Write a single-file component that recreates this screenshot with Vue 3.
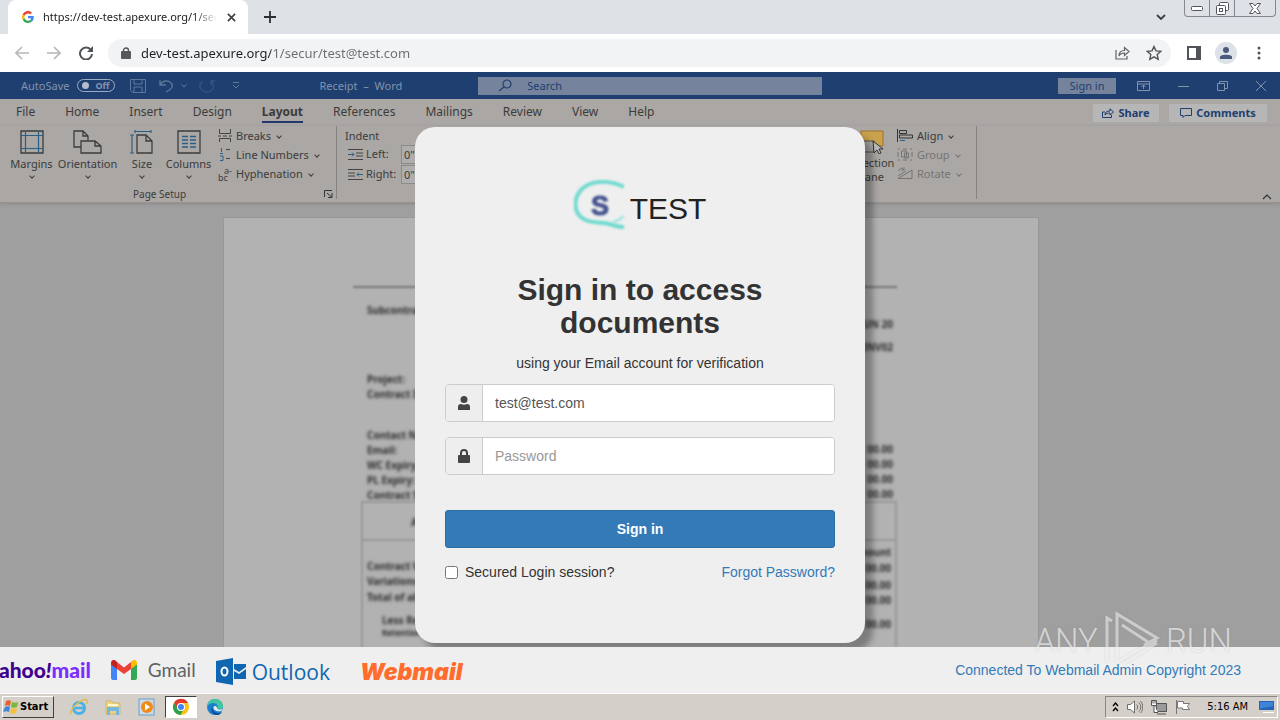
<template>
    <div class="screen">
        <!-- browser tabs -->
        <header class="tab_strip">
            <div class="tab">
                <svg class="g_logo" viewBox="0 0 48 48" width="12" height="12">
                    <path fill="#ea4335" d="M24 9.5c3.5 0 6.700 1.200 9.200 3.600l6.900-6.900C35.900 2.400 30.500 0 24 0 14.600 0 6.500 5.400 2.600 13.200l8 6.200C12.400 13.700 17.700 9.500 24 9.500z" />
                    <path fill="#4285f4" d="M47 24.500c0-1.600-.2-3.100-.4-4.500H24v9h12.900c-.6 3-2.300 5.500-4.800 7.200l7.700 6C44.400 38 47 31.800 47 24.500z" />
                    <path fill="#fbbc05" d="M10.500 28.600a14.500 14.500 0 0 1 0-9.200l-8-6.200a24 24 0 0 0 0 21.600l8-6.200z" />
                    <path fill="#34a853" d="M24 48c6.500 0 11.900-2.100 15.900-5.800l-7.700-6c-2.200 1.500-5 2.300-8.200 2.300-6.300 0-11.600-4.200-13.500-9.900l-8 6.200C6.500 42.600 14.600 48 24 48z" />
                </svg>
                <span class="tab_title">https://dev-test.apexure.org/1/secur</span>
                <button class="plain" aria-label="Close tab">
                    <svg viewBox="0 0 10 10" width="9" height="9"><path d="M1 1l8 8M9 1l-8 8" stroke="#3c4043" stroke-width="1.800" /></svg>
                </button>
            </div>
            <button class="plain new_tab" aria-label="New tab">
                <svg viewBox="0 0 12 12" width="12" height="12"><path d="M6 0v12M0 6h12" stroke="#2b2e33" stroke-width="1.800" /></svg>
            </button>
            <button class="plain tab_search" aria-label="Search tabs">
                <svg viewBox="0 0 10 6" width="10" height="6"><path d="M1 1l4 4 4-4" fill="none" stroke="#3c4043" stroke-width="1.800" /></svg>
            </button>
            <div class="window_buttons">
                <button aria-label="Minimize">
                    <svg viewBox="0 0 12 5" width="12" height="5"><rect x=".5" y=".5" width="11" height="4" rx="1" fill="#fff" stroke="#50545c" /></svg>
                </button>
                <button aria-label="Restore">
                    <svg viewBox="0 0 13 13" width="13" height="13" fill="#fff" stroke="#50545c"><rect x="3.500" y=".5" width="9" height="8" rx="1" /><rect x=".5" y="3.500" width="9" height="9" rx="1" /><rect x="3.500" y="6.500" width="3" height="3" /></svg>
                </button>
                <button class="wide" aria-label="Close">
                    <svg viewBox="0 0 12 11" width="12" height="11"><path d="M.5.5h3.500l2 2.500 2-2.500h3.500l-3.500 5 3.500 5H8L6 8l-2 2.500H.5l3.500-5z" fill="#fff" stroke="#50545c" /></svg>
                </button>
            </div>
        </header>

        <!-- address bar -->
        <nav class="toolbar">
            <button class="plain" aria-label="Back">
                <svg viewBox="0 0 14 14" width="14" height="14" fill="none" stroke="#b4b6b9" stroke-width="1.600"><path d="M14 7H1M7 1L1 7l6 6" /></svg>
            </button>
            <button class="plain" aria-label="Forward">
                <svg viewBox="0 0 14 14" width="14" height="14" fill="none" stroke="#b4b6b9" stroke-width="1.600"><path d="M0 7h13M7 1l6 6-6 6" /></svg>
            </button>
            <button class="plain" aria-label="Reload">
                <svg viewBox="0 0 14 14" width="14" height="14"><path d="M12 4.200A6 6 0 1 0 13 8" fill="none" stroke="#505357" stroke-width="2" /><path d="M14 0v6H8z" fill="#505357" /></svg>
            </button>
            <div class="address">
                <svg viewBox="0 0 10 12" width="10" height="12"><rect y="4" width="10" height="8" rx="1" fill="#55585c" /><path d="M2.500 5V3.500a2.500 2.500 0 0 1 5 0V5" fill="none" stroke="#55585c" stroke-width="1.400" /></svg>
                <input v-model="url" type="text" aria-label="Address" spellcheck="false">
                <button class="plain" aria-label="Share page">
                    <svg viewBox="0 0 15 14" width="15" height="14" fill="none" stroke="#5f6368" stroke-width="1.200"><path d="M1 4v9h11V10M4 10c0-4 2-5.500 5.500-5.500V1.500l4.500 4-4.500 4V7C7 7 5 8 4 10z" /></svg>
                </button>
                <button class="plain" aria-label="Bookmark">
                    <svg viewBox="0 0 16 16" width="16" height="16"><path d="M8 1.500l2 4.400 4.700.5-3.500 3.200 1 4.700L8 11.900l-4.200 2.400 1-4.700L1.300 6.400 6 5.900z" fill="none" stroke="#505357" stroke-width="1.400" /></svg>
                </button>
            </div>
            <button class="plain panel" aria-label="Side panel">
                <svg viewBox="0 0 14 14" width="14" height="14"><path d="M1 1h12v12H1z" fill="none" stroke="#505357" stroke-width="2" /><path d="M9 1h4v12H9z" fill="#505357" /></svg>
            </button>
            <button class="plain profile" aria-label="Profile">
                <svg viewBox="0 0 22 22" width="22" height="22"><circle cx="11" cy="11" r="11" fill="#dde1e8" /><circle cx="11" cy="8" r="3" fill="#4a5a7c" /><path d="M5 17v-2c0-3 12-3 12 0v2z" fill="#4a5a7c" /></svg>
            </button>
            <button class="plain dots" aria-label="Menu">
                <svg viewBox="0 0 4 14" width="4" height="14" fill="#505357"><circle cx="2" cy="2" r="1.500" /><circle cx="2" cy="7" r="1.500" /><circle cx="2" cy="12" r="1.500" /></svg>
            </button>
        </nav>

        <main class="stage">
            <!-- word window behind the dialog -->
            <div class="word">
                <div class="word_title">
                    <span>AutoSave</span>
                    <button class="toggle"><i></i>Off</button>
                    <svg class="save" viewBox="0 0 16 14" width="16" height="14" fill="none" stroke="#5f779b"><path d="M.5.5h15v13H3L.5 11.500zM4 .5V5h8V.5M4 13V8h8v5" /></svg>
                    <svg viewBox="0 0 16 14" width="16" height="14" fill="none" stroke="#5f779b" stroke-width="1.300"><path d="M1 1v5h6M1 6c3-5 8-5 11-2s1 6-5 9" /></svg>
                    <svg class="tiny" viewBox="0 0 6 4" width="6" height="4" fill="none" stroke="#5f779b"><path d="M.5.5L3 3 5.500.5" /></svg>
                    <svg viewBox="0 0 16 14" width="16" height="14" fill="none" stroke="#365682" stroke-width="1.300"><path d="M3 2.500C-3 9 5 13 8 13c6 0 9-6 4-11V6M12 2h4" /></svg>
                    <svg class="more" viewBox="0 0 8 7" width="8" height="7" fill="none" stroke="#5f779b"><path d="M1 .5h6M1 3l3 3 3-3" /></svg>
                    <span class="doc_name">Receipt &nbsp;–&nbsp; Word</span>
                    <label class="search">
                        <svg viewBox="0 0 14 13" width="14" height="13" fill="none" stroke="#1e3f70" stroke-width="1.200"><circle cx="9" cy="5" r="4" /><path d="M6 8l-5 4" /></svg>
                        <input type="text" placeholder="Search" aria-label="Search document">
                    </label>
                    <button class="word_sign">Sign in</button>
                    <div class="word_controls">
                        <svg viewBox="0 0 13 10" width="13" height="10" fill="none" stroke="#8293ad"><path d="M.5.5h12v9H.5zM.5 3h12M6.500 8V4M4.500 6l2-2 2 2" /></svg>
                        <svg viewBox="0 0 11 10" width="11" height="10" stroke="#8293ad"><path d="M0 5.500h11" /></svg>
                        <svg viewBox="0 0 11 10" width="11" height="10" fill="none" stroke="#8293ad"><path d="M.5 2.500h7v7h-7zM2.500 2.500v-2h8v7h-3" /></svg>
                        <svg viewBox="0 0 10 10" width="10" height="10" stroke="#8293ad"><path d="M0 0l10 10M10 0L0 10" /></svg>
                    </div>
                </div>

                <div class="menu">
                    <button v-for="name in menus" :key="name" :class="{ active: name === 'Layout' }">{{ name }}</button>
                    <button class="chip first">
                        <svg viewBox="0 0 12 10" width="12" height="10" fill="none" stroke="#1e3f70"><path d="M3 4H.5v5.500h9V7M3 7c0-3 2-4 5-4V.8L11.500 4 8 7V5C6 5 4 5.500 3 7z" /></svg>
                        Share
                    </button>
                    <button class="chip">
                        <svg viewBox="0 0 12 10" width="12" height="10" fill="none" stroke="#1e3f70"><path d="M.5.5h11v7H5l-2 2v-2H.5z" /></svg>
                        Comments
                    </button>
                </div>

                <div class="ribbon">
                    <section class="group page_setup">
                        <div class="tools">
                            <button class="big">
                                <svg viewBox="0 0 24 24" width="24" height="24" fill="none"><path d="M1 1h22v22H1z" stroke="#3c3c3c" stroke-width="1.300" /><path d="M5.500 1v22M18.500 1v22M1 5.500h22M1 18.500h22" stroke="#2c5f85" stroke-width="1.200" /></svg>
                                Margins<em></em>
                            </button>
                            <button class="big">
                                <svg viewBox="0 0 30 24" width="30" height="24" fill="none" stroke="#3c3c3c" stroke-width="1.300"><path d="M8 17H1V1h9l5 5v4M10 1v5h5" /><path d="M8 11h14l6 5v7H8zM22 11v5h6" /></svg>
                                Orientation<em></em>
                            </button>
                            <button class="big">
                                <svg viewBox="0 0 24 24" width="24" height="24" fill="none"><path d="M7 5h9l6 6v12H7zM16 5v6h6" stroke="#3c3c3c" stroke-width="1.300" /><path d="M5 1.500h16M2 5v18M5 0v3M21 0v3M0 5h4M0 23h4" stroke="#2c5f85" stroke-width="1.200" /></svg>
                                Size<em></em>
                            </button>
                            <button class="big">
                                <svg viewBox="0 0 24 24" width="24" height="24" fill="none"><path d="M1 1h22v22H1z" stroke="#3c3c3c" stroke-width="1.300" /><path d="M5 6.500h6M5 10h6M5 13.500h6M5 17h6M13 6.500h6M13 10h6M13 13.500h6M13 17h6" stroke="#2c5f85" stroke-width="1.400" /></svg>
                                Columns<em></em>
                            </button>
                            <div class="list">
                                <button>
                                    <svg viewBox="0 0 14 13" width="14" height="13" fill="none" stroke="#444"><path d="M1.500 0v4.500h11V0M1.500 13V9.500h11V13M0 7h3M5 7h4M11 7h3" /></svg>
                                    Breaks<em></em>
                                </button>
                                <button>
                                    <svg viewBox="0 0 14 13" width="14" height="13" fill="none"><path d="M3.500 0v4M2 5.500h3M2 8h3v4.500H2" stroke="#2c5f85" /><path d="M8 1.500h4M8 10.500h4" stroke="#444" /></svg>
                                    Line Numbers<em></em>
                                </button>
                                <button>
                                    <span class="hyphen"><span>a-</span><span>bc</span></span>
                                    Hyphenation<em></em>
                                </button>
                            </div>
                        </div>
                        <div class="caption">
                            <span>Page Setup</span>
                            <svg viewBox="0 0 9 8" width="9" height="8" fill="none" stroke="#333"><path d="M.5 7V.5H8M3 3l5 4.500M8 3v4.500H4" /></svg>
                        </div>
                    </section>
                    <section class="group indent">
                        <div>Indent</div>
                        <label>
                            <svg viewBox="0 0 15 11" width="15" height="11" fill="none"><path d="M0 .5h15M8 4h7M8 7h7M0 10.500h15" stroke="#444" /><path d="M0 5.500h6M4 3.500l2 2-2 2" stroke="#2c5f85" /></svg>
                            <span>Left:</span>
                            <input type="text" value='0"'>
                        </label>
                        <label>
                            <svg viewBox="0 0 15 11" width="15" height="11" fill="none"><path d="M0 .5h15M0 4h7M0 7h7M0 10.500h15" stroke="#444" /><path d="M9 5.500h6M11 3.500l-2 2 2 2" stroke="#2c5f85" /></svg>
                            <span>Right:</span>
                            <input type="text" value='0"'>
                        </label>
                    </section>
                    <section class="group arrange">
                        <button class="big">
                            <svg viewBox="0 0 28 24" width="28" height="24"><path d="M4 1h22v15H4z" fill="#c9a24e" stroke="#a5702a" /><path d="M1 11h16v11H1z" fill="#aaa7a5" stroke="#555" /><path d="M16 11l1 12 3-3 2 4 2-1-2-4h4z" fill="#bbb" stroke="#333" /></svg>
                            Selection<br>Pane
                        </button>
                        <div class="list">
                            <button>
                                <svg viewBox="0 0 16 13" width="16" height="13" fill="none" stroke="#333"><path d="M.5 0v13M2.500 1.500h7v3h-7zM2.500 6h13v3h-13z" /><path d="M8 11.500H3" stroke="#2c5f85" /></svg>
                                Align<em></em>
                            </button>
                            <button class="dim">
                                <svg viewBox="0 0 16 13" width="16" height="13" fill="none" stroke="#767472"><path d="M1 1h2M6 1h4M13 1h2M1 12h2M6 12h4M13 12h2M1 4v5M15 4v5M4.500 3v6h5V3zM7.500 5v5h4V5z" /></svg>
                                Group<em></em>
                            </button>
                            <button class="dim">
                                <svg viewBox="0 0 16 13" width="16" height="13" fill="none" stroke="#767472"><path d="M1 11.500h14V3zM1 9l8-5M2 4c0-4 5-3 5-1M7 0v3H4" /></svg>
                                Rotate<em></em>
                            </button>
                        </div>
                    </section>
                    <svg class="collapse" viewBox="0 0 10 6" width="10" height="6"><path d="M1 5l4-4 4 4" fill="none" stroke="#333" stroke-width="1.200" /></svg>
                </div>

                <div class="sheet">
                    <div class="paper">
                        <div class="part details">
                            <div v-for="(col, i) in details" :key="i" class="col">
                                <p v-for="(line, n) in col" :key="n" :style="{ marginTop: line[1] + 'px' }">{{ line[0] }}</p>
                            </div>
                        </div>
                        <div class="part amounts">
                            <div v-for="(col, i) in amounts" :key="i" class="col">
                                <p v-for="(line, n) in col" :key="n" :class="line[2]" :style="{ marginTop: line[1] + 'px' }">{{ line[0] }}</p>
                            </div>
                        </div>
                    </div>
                </div>
            </div>

            <form class="dialog" @submit.prevent>
                <div class="brand">
                    <svg viewBox="0 0 50 50" width="50" height="50">
                        <path d="M50 7C36 0 19 0 9 8-1 17-1 31 8 38c8 6 20 4 27 6 6 2 10 3 15 3" fill="none" stroke="#6fdad0" stroke-width="4" />
                        <path d="M50 36c-3 3-6 5-11 6" fill="none" stroke="#a5e4df" stroke-width="3" />
                        <text x="26" y="35" text-anchor="middle">S</text>
                    </svg>
                    <span>TEST</span>
                </div>
                <h1>Sign in to access documents</h1>
                <p class="hint">using your Email account for verification</p>
                <div class="field">
                    <label for="email">
                        <svg viewBox="0 0 12 14" width="12" height="14" fill="#444"><circle cx="6" cy="3.500" r="3.500" /><path d="M0 14v-3c0-2 1-3 3-3 2 1 4 1 6 0 2 0 3 1 3 3v3z" /></svg>
                    </label>
                    <input id="email" v-model="email" type="text" aria-label="Email">
                </div>
                <div class="field">
                    <label for="password">
                        <svg viewBox="0 0 12 14" width="12" height="14"><rect y="6" width="12" height="8" rx="1" fill="#444" /><path d="M3 7V4a3 3 0 0 1 6 0v3" fill="none" stroke="#444" stroke-width="2" /></svg>
                    </label>
                    <input id="password" v-model="password" type="password" placeholder="Password" aria-label="Password">
                </div>
                <button class="submit" type="submit">Sign in</button>
                <div class="options">
                    <label><input v-model="secured" type="checkbox">Secured Login session?</label>
                    <a href="#">Forgot Password?</a>
                </div>
            </form>
        </main>

        <footer class="mail_bar">
            <div class="yahoo">yahoo<i>!</i><b>mail</b></div>
            <div class="gmail">
                <svg viewBox="0 0 26 20" width="26" height="20">
                    <path d="M0 3v15c0 1 1 2 2 2h4V8z" fill="#4285f4" />
                    <path d="M26 3v15c0 1-1 2-2 2h-4V8z" fill="#34a853" />
                    <path d="M20 2v7l6-4.500V3c0-3-3-4-5-2z" fill="#fbbc04" />
                    <path d="M6 9V2l7 5.500L20 2v7l-7 5z" fill="#ea4335" />
                    <path d="M0 3v1.500L6 9V2L5 1C3-1 0 0 0 3z" fill="#c5221f" />
                </svg>
                Gmail
            </div>
            <div class="outlook">
                <svg viewBox="0 0 31 27" width="31" height="27">
                    <path d="M0 3l17-3v27L0 24z" fill="#1066b0" />
                    <path d="M18 6h12v3l-7 5-5-3zM18 13l5 3 7-5v10H18z" fill="#1066b0" />
                    <ellipse cx="8.500" cy="13.500" rx="3" ry="4" fill="none" stroke="#fff" stroke-width="2" />
                </svg>
                Outlook
            </div>
            <div class="webmail">Webmail</div>
            <a class="copyright" href="#">Connected To Webmail Admin Copyright 2023</a>
        </footer>

        <div class="taskbar">
            <button class="start">
                <svg viewBox="0 0 16 15" width="16" height="15">
                    <path d="M3 1c2-1 4-1 5 0L7 6C5 5 4 5 2 6z" fill="#e8622a" />
                    <path d="M9 2c2 1 4 1 6 0l-1 5c-2 1-4 1-6 0z" fill="#7ab83c" />
                    <path d="M2 7c2-1 4-1 5 0l-1 5c-2-1-4-1-6 0z" fill="#3f86d8" />
                    <path d="M8 8c2 1 4 1 6 0l-1 5c-2 1-4 1-6 0z" fill="#f5c13a" />
                </svg>
                Start
            </button>
            <button class="task" aria-label="Internet Explorer">
                <svg viewBox="0 0 18 18" width="18" height="18" fill="none"><circle cx="9" cy="10" r="5.500" stroke="#4bb0e6" stroke-width="3" /><path d="M5 10h9" stroke="#4bb0e6" stroke-width="2.500" /><path d="M1 16C-1 11 13-1 17 2c1 1 0 3-1 4" stroke="#e3bd45" stroke-width="1.500" /></svg>
            </button>
            <button class="task" aria-label="Explorer">
                <svg viewBox="0 0 18 18" width="18" height="18"><path d="M2 3h6l1 2h7v11H2z" fill="#edd382" stroke="#c8a850" stroke-width=".6" /><path d="M3 9h12v8h-3v-4H6v4H3z" fill="#75b8dd" /><path d="M4 6h10v2H4z" fill="#fff6cf" /></svg>
            </button>
            <button class="task" aria-label="Media Player">
                <svg viewBox="0 0 18 18" width="18" height="18"><rect x="1" y="1" width="15" height="16" fill="#c8dcec" stroke="#6d9fc6" /><circle cx="9" cy="9" r="6" fill="#f08a1d" /><path d="M7 5.500l5 3.500-5 3.500z" fill="#fff" /></svg>
            </button>
            <button class="task current" aria-label="Chrome">
                <svg viewBox="0 0 18 18" width="18" height="18"><circle cx="9" cy="9" r="8" fill="#fbc116" /><path d="M2 5a8 8 0 0 1 14 0H9a4 4 0 0 0-3.500 6z" fill="#e33b2e" /><path d="M2 5l4 6a4 4 0 0 0 5 1.500L8.500 17A8 8 0 0 1 2 5z" fill="#2ba14b" /><circle cx="9" cy="9" r="4" fill="#fff" /><circle cx="9" cy="9" r="3" fill="#4285f4" /></svg>
            </button>
            <button class="task" aria-label="Edge">
                <svg viewBox="0 0 18 18" width="18" height="18"><circle cx="9" cy="9" r="8" fill="#1b7fd0" /><path d="M1 9C1 4 5 1 9 1c5 0 8 3.500 8 7 0 3-3 4-6 3 2-4-1-6-4-6S2 7 1 9z" fill="#42c6a0" /><path d="M7 8c-2 3 1 7 5 7 2 0 3-.5 4-1-3 5-9 3-10 0-1-2-.5-4.500 1-6z" fill="#0c4f9e" /><path d="M7.500 9c1-2 4-1 3.500 1.500 1 1.500 4 1.500 6 0L15 13c-4 1-8-1-7.500-4z" fill="#e4eef0" /></svg>
            </button>
            <div class="tray">
                <svg viewBox="0 0 7 10" width="7" height="10" fill="none" stroke="#000" stroke-width="1.300"><path d="M1 4l2.500-3L6 4M1 9l2.500-3L6 9" /></svg>
                <svg viewBox="0 0 16 14" width="16" height="14" fill="none" stroke="#6c6c6c"><path d="M.5 4.500h3L7.500 1v12l-4-3.500h-3z" fill="#fff" /><path d="M9.500 4.500c1.500 1 1.500 4 0 5M11.500 2.500c3 2 3 7 0 9M13.500 1c3 3 3 9 0 12" /></svg>
                <svg viewBox="0 0 16 15" width="16" height="15" stroke="#555"><path d="M5.500 3.500h10v8h-10zM6 14h9" fill="#9a9a9a" /><path d="M.5.5h5v5h-5zM3 5.500v7h4M2 .5v3M4 .5v3" fill="#fff" /></svg>
                <svg viewBox="0 0 16 14" width="16" height="14" stroke="#777"><path d="M1.500 0v14M2.500 1.500h6v2h6l-2 3 2 3h-7V8h-5z" fill="#fff" /></svg>
                <time>5:16 AM</time>
                <svg viewBox="0 0 16 14" width="16" height="14"><path d="M0 1h15v9H0z" fill="#2763b8" /><path d="M1 2h13v4C9 8 5 7 1 9z" fill="#3d83d8" /><path d="M4 12h11v1H4z" fill="#fff" /></svg>
            </div>
        </div>

        <div class="watermark">
            <span>ANY</span>
            <svg viewBox="0 0 56 60" width="56" height="60" fill="none" stroke="#fff" stroke-opacity=".5" stroke-width="3"><path d="M8 10L3 7v44M13 52V3l40 24-13 7M13 3v48l40-22M18 14l26 17M20 52l33-20" /></svg>
            <span>RUN</span>
        </div>
    </div>
</template>

<script setup>
import { ref } from 'vue'

const url = ref('dev-test.apexure.org/1/secur/test@test.com')
const email = ref('test@test.com')
const password = ref('')
const secured = ref(false)

const menus = ['File', 'Home', 'Insert', 'Design', 'Layout', 'References', 'Mailings', 'Review', 'View', 'Help']

// [text, space above, class]
const details = [
    [
        ['Subcontractor', 15],
        ['Project:', 54],
        ['Contract ID', 0],
        ['Contact Name', 26],
        ['Email:', 0],
        ['WC Expiry:', 0],
        ['PL Expiry:', 0],
        ['Contract Sum', 0],
    ],
    [
        ['JUN 20', 29],
        ['INV02', 8],
        ['00.00', 87],
        ['00.00', 0],
        ['00.00', 0],
        ['00.00', 0],
    ],
]
const amounts = [
    [
        ['A', 12, 'head'],
        ['Contract Work', 29],
        ['Variations, etc', 0],
        ['Total of above', 1],
        ['Less Retention', 8, 'sub'],
        ['Retention', 0, 'sub small'],
    ],
    [
        ['Amount', 42],
        ['00.00', 1],
        ['00.00', 2],
        ['00.00', 0],
        ['00.00', 9],
    ],
]
</script>

<style>
body {
    margin: 0;
}
</style>

<style scoped>
.screen {
    display: flex;
    flex-direction: column;
    height: 100vh;
    min-height: 720px;
    overflow: hidden;
    position: relative;
    font-family: "Liberation Sans", Arial, sans-serif;
    font-size: 14px;
    line-height: 20px;
    color: #333;
}

button {
    font: inherit;
    color: inherit;
    border: 0;
    padding: 0;
    background: none;
}

input {
    font: inherit;
    color: inherit;
    min-width: 0;
    box-sizing: border-box;
}

svg {
    flex: none;
}

.plain {
    display: flex;
}

/* browser */
.tab_strip {
    display: flex;
    align-items: center;
    height: 34px;
    background: #dee1e6;
}

.tab {
    display: flex;
    align-items: center;
    box-sizing: border-box;
    width: 240px;
    height: 34px;
    margin-left: 8px;
    padding: 0 12px 0 14px;
    background: #fff;
    border-radius: 8px 8px 0 0;
}

.tab_title {
    flex: 1;
    margin: 0 11px 0 9px;
    overflow: hidden;
    white-space: nowrap;
    font: 11px/20px "Noto Sans", sans-serif;
    color: #202124;
    mask-image: linear-gradient(90deg, #000 150px, transparent 174px);
}

.new_tab {
    margin-left: 16px;
}

.tab_search {
    margin-left: auto;
    margin-right: 18px;
}

.window_buttons {
    display: flex;
    align-self: flex-start;
    margin-right: 4px;
    border: 1px solid #85898f;
    border-top: 0;
    border-radius: 0 0 4px 4px;
}

.window_buttons button {
    display: flex;
    align-items: center;
    justify-content: center;
    width: 25px;
    height: 16px;
    border-right: 1px solid #85898f;
}

.window_buttons .wide {
    width: 40px;
    border: 0;
}

.toolbar {
    display: flex;
    align-items: center;
    gap: 18px;
    height: 38px;
    padding: 0 19px 0 15px;
    background: #fff;
}

.panel {
    margin-left: -2px;
}

.profile {
    margin-left: -4px;
}

.dots {
    margin-left: 2px;
}

.address {
    display: flex;
    flex: 1;
    align-items: center;
    height: 28px;
    margin-left: -3px;
    padding: 0 9px 0 13px;
    border-radius: 14px;
    background: #f1f3f4;
}

.address input {
    flex: 1;
    border: 0;
    padding: 0 0 0 10px;
    margin-right: 17px;
    font: 13px/20px "Noto Sans", sans-serif;
    background: linear-gradient(90deg, #202124 140px, #6a6d71 140px);
    background-clip: text;
    -webkit-background-clip: text;
    color: transparent;
}

.address button + button {
    margin-left: 16px;
}

/* word */
.stage {
    display: grid;
    flex: 1;
    min-height: 0;
    grid-template: minmax(0, 1fr) / minmax(0, 1fr);
    overflow: hidden;
    background: #9f9f9f;
}

.word,
.dialog {
    grid-area: 1 / 1;
}

.word {
    display: flex;
    flex-direction: column;
    overflow: hidden;
    font: 11px/16px "Noto Sans", "Open Sans", sans-serif;
    color: #3c3b3a;
}

.word_title {
    display: flex;
    flex: none;
    align-items: center;
    height: 27px;
    padding: 0 14px 0 21px;
    background: #1e3f70;
    color: #8293ad;
}

.toggle {
    display: flex;
    align-items: center;
    gap: 6px;
    box-sizing: border-box;
    width: 38px;
    height: 13px;
    margin-left: 8px;
    padding-left: 4px;
    border: 1px solid #9dabc0;
    border-radius: 7px;
    font-size: 9px;
    font-weight: bold;
    line-height: 11px;
}

.toggle i {
    width: 7px;
    height: 7px;
    border-radius: 50%;
    background: #b4bdcb;
}

.save {
    margin: 0 13px 0 15px;
}

.tiny {
    margin: 0 12px 0 6px;
}

.more {
    margin-left: 17px;
}

.doc_name {
    margin-left: 79px;
}

.search {
    display: flex;
    align-items: center;
    width: 344px;
    height: 18px;
    margin-left: 76px;
    background: #75849c;
    color: #1e3f70;
}

.search svg {
    margin-left: 20px;
}

.search input {
    width: 260px;
    padding: 0 0 0 15px;
    border: 0;
    background: none;
}

.search input::placeholder {
    color: #1e3f70;
}

.word_sign {
    width: 58px;
    height: 16px;
    margin-left: auto;
    background: #75849c;
    color: #1e3f70;
}

.word_controls {
    display: flex;
    align-items: center;
    gap: 28px;
    margin-left: 21px;
}

.menu {
    display: flex;
    flex: none;
    align-items: center;
    gap: 30px;
    height: 27px;
    padding: 0 13px 0 16px;
    background: #aaa7a5;
    font-size: 12px;
}

.menu button {
    height: 20px;
    border-bottom: 2px solid transparent;
}

.menu .active {
    font-weight: bold;
    border-color: #25386e;
}

.menu .chip {
    display: flex;
    align-items: center;
    justify-content: center;
    gap: 4px;
    width: 98px;
    height: 18px;
    margin-left: -20px;
    border: 0;
    background: #b6b6b6;
    color: #1e3f70;
    font-size: 11px;
    font-weight: bold;
}

.menu .first {
    width: 66px;
    margin-left: auto;
}

.ribbon {
    display: flex;
    flex: none;
    height: 76px;
    background: #aaa7a5;
    border-bottom: 1px solid #959391;
    box-shadow: 0 1px 3px #888;
}

.group {
    box-sizing: border-box;
    height: 73px;
    border-right: 1px solid #858381;
}

.page_setup {
    width: 337px;
    padding-left: 9px;
}

.tools {
    display: flex;
}

.big {
    display: flex;
    flex-direction: column;
    align-items: center;
    height: 61px;
    padding-top: 4px;
    line-height: 15px;
    width: 45px;
}

.big svg {
    margin-bottom: 2px;
}

.big em {
    margin-top: 3px;
}

.big:nth-child(2) {
    width: 67px;
}

.big:nth-child(3) {
    width: 42px;
}

.big:nth-child(4) {
    width: 51px;
}

em {
    display: inline-block;
    width: 3px;
    height: 3px;
    border: solid currentColor;
    border-width: 0 1px 1px 0;
    transform: rotate(45deg);
}

.list button {
    display: flex;
    align-items: center;
    gap: 4px;
    height: 19px;
    white-space: nowrap;
}

.list em {
    margin-left: 2px;
}

.page_setup .list {
    margin-left: 4px;
}

.hyphen {
    display: flex;
    flex-direction: column;
    width: 14px;
    font-size: 9px;
    line-height: 7px;
    text-align: left;
}

.hyphen span:first-child {
    text-align: right;
}

.caption {
    display: flex;
    justify-content: space-between;
    align-items: center;
    padding: 0 3px 0 124px;
    font-size: 10px;
    line-height: 14px;
}

.indent {
    width: 508px;
    padding: 2px 0 0 8px;
    border: 0;
}

.indent label {
    display: flex;
    align-items: center;
    gap: 3px;
    height: 20px;
}

.indent svg {
    margin-left: 3px;
}

.indent label span {
    width: 32px;
}

.indent input {
    width: 60px;
    height: 19px;
    padding: 0 2px;
    border: 1px solid #8d8b89;
    background: #b0aeac;
}

.arrange {
    display: flex;
    width: 132px;
}

.arrange .big {
    width: 52px;
    line-height: 14px;
}

.dim {
    color: #767472;
}

.collapse {
    margin: auto 8px 2px auto;
}

.sheet {
    flex: 1;
    min-height: 0;
    overflow: hidden;
    padding: 15px 242px 0 224px;
}

.paper {
    min-height: 600px;
    padding: 68px 141px 0 129px;
    background: #b2b2b2;
    box-shadow: 0 0 1px #777;
}

.part {
    display: flex;
    justify-content: space-between;
    font-size: 10px;
    line-height: 15px;
    font-weight: bold;
    color: #2c2c2c;
    filter: blur(1px);
}

.details {
    height: 213px;
    padding: 0 4px 0 14px;
    border-top: 2px solid #777;
}

.amounts {
    height: 200px;
    margin-left: 8px;
    padding: 0 4px;
    border: 2px solid #999;
    background: linear-gradient(#999, #999) 0 36px / 100% 2px no-repeat;
}

.part p {
    margin: 0;
}

.col {
    filter: blur(1px);
}

.col:last-child {
    text-align: right;
}

.head {
    padding-left: 44px;
}

.sub {
    padding-left: 15px;
}

.small {
    font-size: 8px;
    line-height: 10px;
}

/* sign-in dialog */
.dialog {
    align-self: start;
    justify-self: center;
    position: relative;
    display: flex;
    flex-direction: column;
    box-sizing: border-box;
    width: 450px;
    max-width: 100%;
    margin-top: 55px;
    padding: 53px 30px 61px;
    border-radius: 20px;
    background: #efefef;
    box-shadow: 8px 8px 6px rgba(0, 0, 0, .3);
}

.brand {
    display: flex;
    justify-content: center;
    gap: 6px;
    color: #222;
    font-size: 30px;
    line-height: 58px;
    height: 50px;
}

.brand svg {
    filter: blur(1px);
}

.brand text {
    font: 900 27px "Liberation Sans", sans-serif;
    fill: #46548f;
    stroke: #46548f;
}

h1 {
    margin: 43px 0 14px;
    font-size: 30px;
    line-height: 33px;
    text-align: center;
}

.hint {
    margin: 0 0 11px;
    text-align: center;
}

.field {
    display: flex;
    box-sizing: border-box;
    height: 38px;
    margin-bottom: 15px;
    border: 1px solid #ccc;
    border-radius: 4px;
    background: #fff;
    overflow: hidden;
}

.field label {
    display: flex;
    align-items: center;
    justify-content: center;
    width: 36px;
    border-right: 1px solid #ccc;
    background: #eee;
}

.field input {
    flex: 1;
    padding: 0 12px;
    border: 0;
    color: #555;
}

.field input::placeholder {
    color: #999;
}

.submit {
    height: 38px;
    margin-top: 20px;
    border: 1px solid #2e6da4;
    border-radius: 3px;
    background: #337ab7;
    color: #fff;
    font-weight: bold;
}

.options {
    display: flex;
    justify-content: space-between;
    margin-top: 14px;
}

.options label {
    display: flex;
    align-items: center;
    gap: 7px;
}

.options input {
    margin: 0;
}

a {
    color: #337ab7;
    text-decoration: none;
}

/* footer */
.mail_bar {
    position: relative;
    display: flex;
    align-items: center;
    height: 46px;
    padding-right: 39px;
    background: #efefef;
    white-space: nowrap;
}

.yahoo {
    margin-left: -12px;
    font: 900 21px/24px Lato, sans-serif;
    color: #400090;
}

.yahoo b {
    font-weight: 900;
    color: #7d2eff;
}

.gmail {
    display: flex;
    align-items: center;
    gap: 11px;
    margin-left: 20px;
    font: 19px/24px Lato, sans-serif;
    color: #5f6368;
}

.outlook {
    display: flex;
    align-items: center;
    gap: 5px;
    margin-left: 20px;
    padding-top: 3px;
    font: 21px/28px "Open Sans", sans-serif;
    color: #1066b0;
}

.webmail {
    margin-left: 30px;
    padding-top: 4px;
    font: italic 900 23px/28px Inter, sans-serif;
    color: #ff6c2c;
}

.copyright {
    margin-left: auto;
}

/* windows taskbar */
.taskbar {
    display: flex;
    align-items: center;
    box-sizing: border-box;
    height: 27px;
    padding: 0 2px;
    border-top: 1px solid #fff;
    background: #d4cfc8;
    color: #000;
    font: 11px/16px "DejaVu Sans Condensed", "Noto Sans", sans-serif;
}

.start {
    display: flex;
    align-items: center;
    gap: 1px;
    box-sizing: border-box;
    width: 52px;
    height: 22px;
    margin-right: 9px;
    border: 1px solid #fff;
    border-right-color: #404040;
    border-bottom-color: #404040;
    font-weight: bold;
}

.task {
    display: flex;
    align-items: center;
    justify-content: center;
    box-sizing: border-box;
    width: 32px;
    height: 22px;
    margin-right: 2px;
}

.current {
    border: 1px solid #fff;
    border-top-color: #404040;
    border-left-color: #404040;
    background: #fff;
}

.tray {
    display: flex;
    align-items: center;
    gap: 8px;
    box-sizing: border-box;
    height: 22px;
    margin-left: auto;
    padding: 0 2px 0 6px;
    border: 1px solid #fff;
    border-top-color: #888;
    border-left-color: #888;
}

.tray time {
    margin: 0 3px 0 8px;
}

.watermark {
    position: absolute;
    right: 48px;
    bottom: 49px;
    display: flex;
    align-items: center;
    gap: 6px;
    font: 300 33px/60px Roboto, "Liberation Sans", sans-serif;
    color: rgba(255, 255, 255, .6);
    text-shadow: 0 0 2px rgba(120, 120, 120, .3);
    pointer-events: none;
}

.watermark svg {
    filter: drop-shadow(0 0 1px rgba(120, 120, 120, .4));
}
</style>
